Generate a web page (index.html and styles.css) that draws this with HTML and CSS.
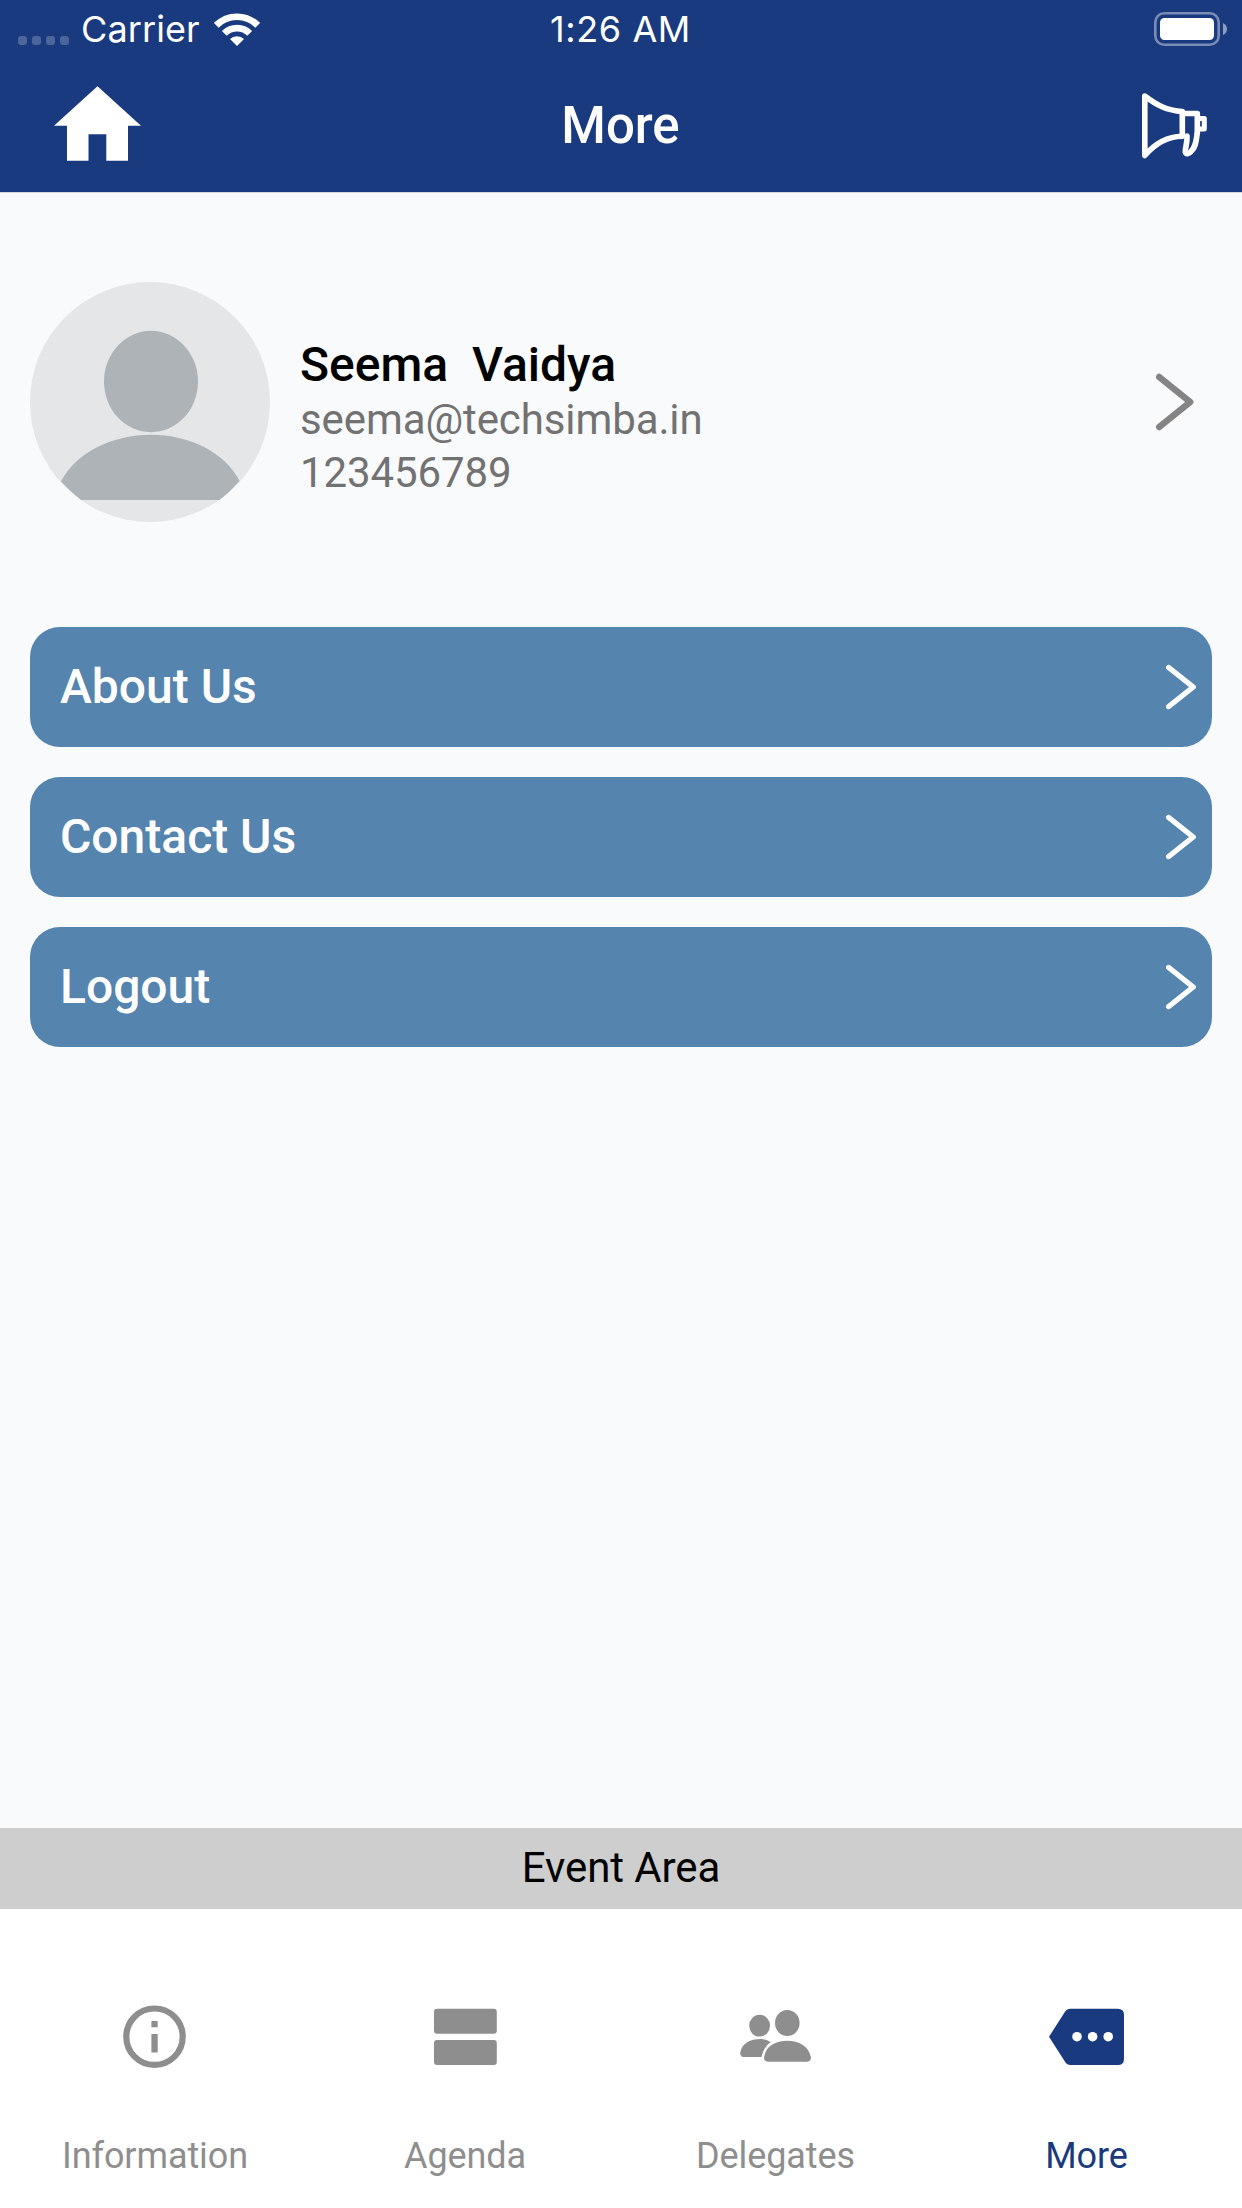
FILE: index.html
```html
<!doctype html>
<html lang="en">
<head>
    <meta charset="utf-8">
    <title>More</title>
    <link rel="stylesheet" href="styles.css">
</head>
<body>
    <header>
        <div class="status">
            <div class="carrier">
                <span class="signal"><i></i><i></i><i></i><i></i></span>
                <span class="carrier-name">Carrier</span>
                <svg class="wifi" width="46" height="34" viewBox="0 0 46 34">
                    <path d="M2.3 12.3A29.3 29.3 0 0 1 43.7 12.3" fill="none" stroke="#fff" stroke-width="6.7"/>
                    <path d="M10.3 20.3A18 18 0 0 1 35.7 20.3" fill="none" stroke="#fff" stroke-width="6.8"/>
                    <path d="M23 33L16 26A10 10 0 0 1 30 26Z" fill="#fff"/>
                </svg>
            </div>
            <span class="time">1:26 AM</span>
            <svg class="battery" width="73" height="34" viewBox="0 0 73 34">
                <rect x="1.3" y="1.3" width="63.4" height="31.4" rx="9" fill="none" stroke="#fff" stroke-opacity=".42" stroke-width="2.6"/>
                <rect x="6" y="6" width="54" height="22" rx="4.5" fill="#fff"/>
                <path d="M69 11Q73 13 73 17T69 23Z" fill="#fff" fill-opacity=".5"/>
            </svg>
        </div>
        <nav class="navbar">
            <svg class="home" width="88" height="76" viewBox="0 0 88 76">
                <path d="M43.5 .3L87 39.7H74V74.7H52.3V48.3H34.5V74.7H13V39.7H0Z" fill="#fff"/>
            </svg>
            <h1>More</h1>
            <svg class="megaphone" width="66" height="66" viewBox="0 0 66 66" fill="none" stroke="#fff" stroke-width="5.6" stroke-linecap="round" stroke-linejoin="round">
                <path d="M3.8 3C15.500 12 25.500 17.500 41.300 18.500V43.200C25.500 43.500 13.500 51 3.800 62.500Z"/>
                <path d="M41.3 20.5H56.3V40"/>
                <path d="M57.3 25.5H63.3V36H57.3" stroke-width="5"/>
                <path d="M46 43C46.5 50 44 55 44.3 59C45 61.5 48 61 50 58.5C55 54 55 48 56.3 40"/>
            </svg>
        </nav>
    </header>

    <main>
        <section class="profile">
            <svg class="avatar" width="240" height="240" viewBox="0 0 240 240">
                <circle cx="120" cy="120" r="120" fill="#e4e6e8"/>
                <ellipse cx="121" cy="99.5" rx="47" ry="50.7" fill="#aeb3b8"/>
                <path d="M31 199.5C46 170 83 152.7 121 152.7S195 170 209.5 199Q200 210 189.5 218H51Q41 210 31 199.5Z" fill="#aeb3b8"/>
            </svg>
            <div class="details">
                <div class="name">Seema  Vaidya</div>
                <div class="contact">seema@techsimba.in</div>
                <div class="contact">123456789</div>
            </div>
            <svg class="open" width="38" height="58" viewBox="0 0 38 58">
                <path d="M3.2 4L34.2 29L3.2 54" fill="none" stroke="#848484" stroke-width="6.4" stroke-linecap="round" stroke-linejoin="round"/>
            </svg>
        </section>

        <ul class="menu">
            <li>
                <span>About Us</span>
                <svg width="30" height="46" viewBox="0 0 30 46"><path d="M2.7 3.5L27.2 23L2.7 42.5"/></svg>
            </li>
            <li>
                <span>Contact Us</span>
                <svg width="30" height="46" viewBox="0 0 30 46"><path d="M2.7 3.5L27.2 23L2.7 42.5"/></svg>
            </li>
            <li>
                <span>Logout</span>
                <svg width="30" height="46" viewBox="0 0 30 46"><path d="M2.7 3.5L27.2 23L2.7 42.5"/></svg>
            </li>
        </ul>
    </main>

    <div class="area">Event Area</div>

    <footer class="tabs">
        <div class="tab">
            <svg width="76" height="75" viewBox="0 0 76 75">
                <circle cx="37.5" cy="37.7" r="28.2" fill="none" stroke="currentColor" stroke-width="6.2"/>
                <path d="M34.4 22H40.7V28.3H34.4ZM34.4 35H40.7V53.5H34.4Z"/>
            </svg>
            <span>Information</span>
        </div>
        <div class="tab">
            <svg width="76" height="75" viewBox="0 0 76 75">
                <rect x="7" y="9.8" width="62.8" height="25" rx="3"/>
                <rect x="7" y="41" width="62.8" height="25" rx="3"/>
            </svg>
            <span>Agenda</span>
        </div>
        <div class="tab">
            <svg width="76" height="75" viewBox="0 0 76 75">
                <ellipse cx="21.6" cy="26.7" rx="10.4" ry="10.9"/>
                <ellipse cx="49.3" cy="24" rx="12.3" ry="13"/>
                <path d="M5.5 58Q2.2 57.7 2.2 54C3.5 44 13 40 22 40Q28 40 32.7 43Q25.5 48.5 23.5 58Z"/>
                <path d="M30 62.7Q26 62.3 26 58.5C27.5 46.5 38 41.7 49.3 41.7S70.5 46.5 73 58.5Q73 62.3 69 62.7Z"/>
            </svg>
            <span>Delegates</span>
        </div>
        <div class="tab active">
            <svg width="76" height="75" viewBox="0 0 76 75">
                <path d="M0 37.7L16 12.8Q18 9.7 21.5 9.7H68.7Q75 9.7 75 16V60Q75 66 68.7 66H21.5Q18 66 16 62.7Z"/>
                <g fill="#fff">
                    <circle cx="28" cy="37.7" r="4.8"/>
                    <circle cx="43.6" cy="37.7" r="4.8"/>
                    <circle cx="59.2" cy="37.7" r="4.8"/>
                </g>
            </svg>
            <span>More</span>
        </div>
    </footer>
</body>
</html>
```
FILE: styles.css
```css
* {
    box-sizing: border-box;
}

body {
    margin: 0;
    height: 2208px;
    display: flex;
    flex-direction: column;
    background: #f9fafc;
    font-family: Roboto, sans-serif;
}

svg {
    display: block;
    flex: none;
}

header {
    height: 193px;
    background: #1a3a7f;
    border-bottom: 1px solid #d5d7db;
    color: #fff;
}

.status {
    height: 60px;
    padding: 0 15px 0 18px;
    display: grid;
    grid-template-columns: 1fr auto 1fr;
    font: 36px/59px Inter, sans-serif;
}

.carrier {
    display: flex;
}

.signal {
    display: flex;
    gap: 5px;
    padding-top: 36px;
}

.signal i {
    width: 9px;
    height: 9px;
    border-radius: 3px;
    background: rgba(255, 255, 255, .22);
}

.carrier-name {
    width: 119px;
    margin-left: 12px;
    letter-spacing: .1px;
}

.wifi {
    margin: 13px 0 0 14px;
}

.time {
    margin-left: -4px;
    letter-spacing: .6px;
}

.battery {
    justify-self: end;
    margin-top: 12px;
}

.navbar {
    height: 132px;
    padding: 0 35px 0 54px;
    display: grid;
    grid-template-columns: 1fr auto 1fr;
    align-items: center;
}

.home {
    margin-bottom: 4px;
}

.megaphone {
    justify-self: end;
}

h1 {
    margin: 0 0 1px -20px;
    font-size: 51px;
    font-weight: 500;
}

main {
    flex: 1;
    padding: 89px 30px 0;
}

.profile {
    display: flex;
    align-items: center;
    height: 240px;
}

.details {
    flex: 1;
    padding: 30px 0 0 30px;
}

.name {
    font-size: 48px;
    line-height: 57px;
    font-weight: 500;
    color: #000;
    white-space: pre;
}

.contact {
    font-size: 42px;
    line-height: 53px;
    letter-spacing: -.1px;
    color: #727272;
}

.open {
    margin-right: 18px;
}

.menu {
    list-style: none;
    margin: 105px 0 0;
    padding: 0;
    display: flex;
    flex-direction: column;
    gap: 30px;
}

.menu li {
    height: 120px;
    padding: 0 16px 0 30px;
    display: flex;
    align-items: center;
    justify-content: space-between;
    border-radius: 30px;
    background: #5584af;
    color: #fff;
    font-size: 48px;
    font-weight: 500;
}

.menu span {
    margin-bottom: 2px;
}

.menu path {
    fill: none;
    stroke: #fff;
    stroke-width: 5.4;
    stroke-linecap: round;
    stroke-linejoin: round;
}

.area {
    height: 81px;
    background: #cecece;
    color: #000;
    font-size: 42px;
    line-height: 80px;
    letter-spacing: -.1px;
    text-align: center;
}

.tabs {
    height: 299px;
    padding-top: 90px;
    display: grid;
    grid-template-columns: 310px 310px 311px 311px;
    background: #fff;
    color: #8e8e8e;
}

.tab {
    display: flex;
    flex-direction: column;
    align-items: center;
    gap: 61px;
    font-size: 36px;
    line-height: 42px;
    letter-spacing: -.1px;
}

.tab svg {
    fill: currentColor;
}

.active {
    color: #1a3a7f;
}
```
